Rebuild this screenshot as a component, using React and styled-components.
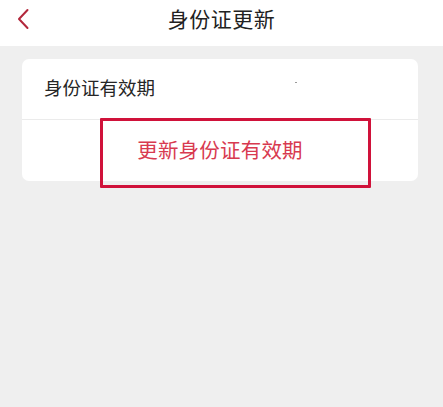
import React from "react";
import styled, { createGlobalStyle } from "styled-components";

const Global = createGlobalStyle`
  html, body { margin: 0; padding: 0; background: #efefef; }
  body { font-family: "Noto Sans CJK SC", "Noto Sans", sans-serif; }
`;

const Page = styled.div`
  width: 443px;
  height: 407px;
  background: #efefef;
  display: flex;
  flex-direction: column;
`;

const NavBar = styled.header`
  position: relative;
  height: 46px;
  background: #ffffff;
  display: flex;
  align-items: center;
  justify-content: center;
  flex-shrink: 0;
`;

const BackButton = styled.button`
  position: absolute;
  left: 12px;
  top: 6px;
  width: 22px;
  height: 26px;
  padding: 0;
  border: none;
  background: transparent;
  display: flex;
  align-items: center;
  justify-content: center;
`;

const Title = styled.h1`
  margin: 0;
  margin-top: -10px;
  font-size: 21px;
  font-weight: 400;
  color: #222222;
  letter-spacing: 0.5px;
`;

const Body = styled.main`
  padding: 13px 25px 0 22px;
`;

const Card = styled.section`
  position: relative;
  background: #ffffff;
  border-radius: 7px;
  display: flex;
  flex-direction: column;
`;

const Row = styled.div`
  height: ${(p) => p.$h}px;
  display: flex;
  align-items: center;
  justify-content: ${(p) => (p.$center ? "center" : "flex-start")};
  padding: 0 22px;
  border-top: ${(p) => (p.$divided ? "1px solid #ebebeb" : "none")};
`;

const Label = styled.span`
  font-size: 18.5px;
  color: #262626;
  margin-top: -4px;
`;

const Dot = styled.span`
  position: absolute;
  left: 273px;
  top: 23px;
  width: 2px;
  height: 1px;
  background: #9a9a9a;
`;

const ActionText = styled.span`
  font-size: 20.5px;
  color: #d83a50;
  margin-top: -3px;
  letter-spacing: 0.2px;
`;

const Highlight = styled.div`
  position: absolute;
  left: 78px;
  top: 59px;
  width: 265px;
  height: 64px;
  border: 3px solid #d0123a;
  border-radius: 1px;
  pointer-events: none;
`;

export default function App() {
  return (
    <>
      <Global />
      <Page>
        <NavBar>
          <BackButton aria-label="返回">
            <svg width="14" height="22" viewBox="0 0 14 22">
              <path
                d="M11.5 2 L3 11 L11.5 20"
                fill="none"
                stroke="#b3283c"
                strokeWidth="2"
                strokeLinecap="round"
                strokeLinejoin="round"
              />
            </svg>
          </BackButton>
          <Title>身份证更新</Title>
        </NavBar>
        <Body>
          <Card>
            <Row $h={60}>
              <Label>身份证有效期</Label>
            </Row>
            <Dot />
            <Row $h={61} $center $divided>
              <ActionText>更新身份证有效期</ActionText>
            </Row>
            <Highlight />
          </Card>
        </Body>
      </Page>
    </>
  );
}
